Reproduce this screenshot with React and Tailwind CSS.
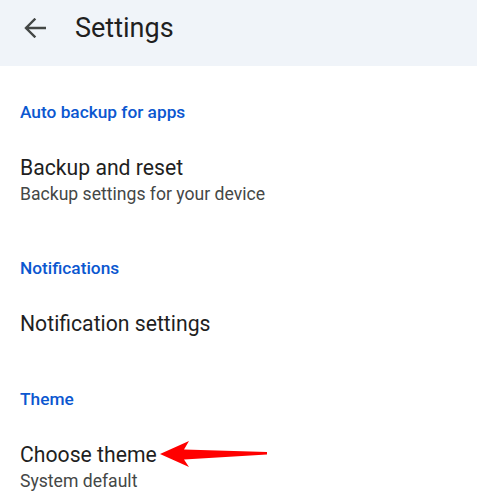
import React from "react";

function SectionHeader({ children }) {
  return (
    <div className="px-5 h-6 flex items-center text-[17.3px] font-medium text-[#0b57d0] leading-6">
      {children}
    </div>
  );
}

function Item({ title, subtitle }) {
  return (
    <div className="px-5 mt-[30px]">
      <div className="text-[21.2px] leading-7 text-[#1f1f1f]">{title}</div>
      {subtitle && (
        <div className="text-[17.6px] leading-5 mt-[2px] text-[#444746]">{subtitle}</div>
      )}
    </div>
  );
}

export default function App() {
  return (
    <div
      className="w-[477px] h-[500px] bg-white overflow-hidden relative"
      style={{ fontFamily: "Roboto, 'Noto Sans', sans-serif" }}
    >
      <div className="h-[66px] bg-[#f0f4f9] flex items-center">
        <div className="w-[75px] flex items-center pl-[24px] -mt-[10px]">
          <svg width="22" height="20" viewBox="0 0 22 20" fill="none">
            <path
              d="M21 10H2.5M10.5 1.5L2 10l8.5 8.5"
              stroke="#444746"
              strokeWidth="2.4"
              strokeLinecap="square"
            />
          </svg>
        </div>
        <div className="text-[27px] text-[#1f1f1f] leading-8 -mt-[11px]">Settings</div>
      </div>

      <div className="pt-[34px]">
        <SectionHeader>Auto backup for apps</SectionHeader>
        <Item title="Backup and reset" subtitle="Backup settings for your device" />
        <div className="mt-[52px]">
          <SectionHeader>Notifications</SectionHeader>
        </div>
        <Item title="Notification settings" />
        <div className="mt-[49px]">
          <SectionHeader>Theme</SectionHeader>
        </div>
        <Item title="Choose theme" subtitle="System default" />
      </div>

      <svg
        className="absolute left-0 top-0 pointer-events-none"
        width="477"
        height="500"
        viewBox="0 0 477 500"
      >
        <polygon
          points="160,454 189,441 184,449.5 267,452 267,454.5 184,459.5 189,467"
          fill="#ff0000"
        />
      </svg>
    </div>
  );
}
